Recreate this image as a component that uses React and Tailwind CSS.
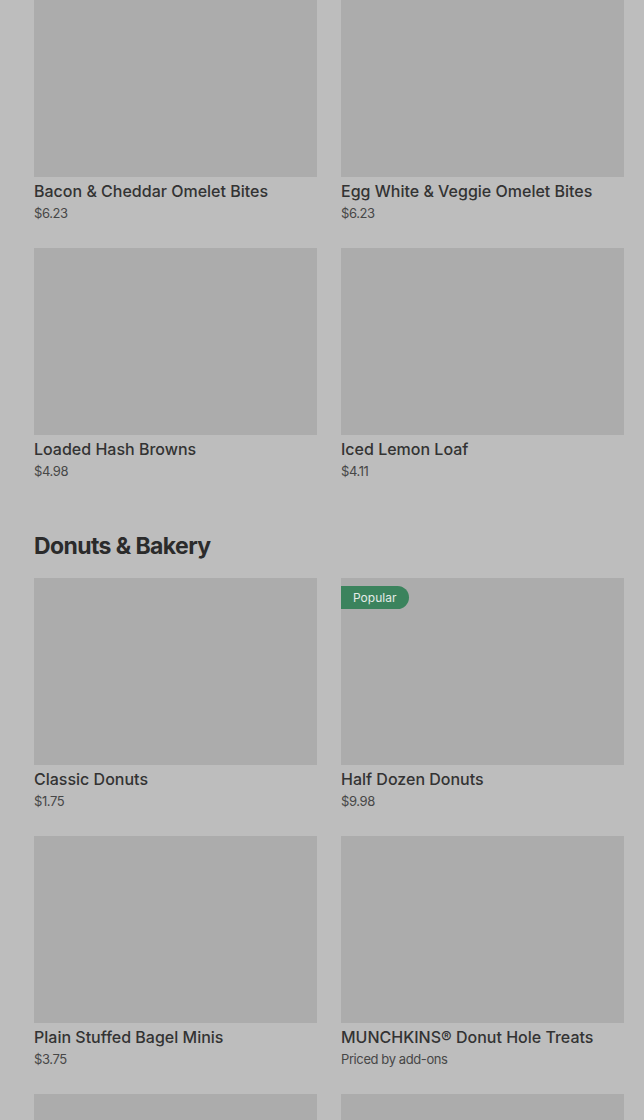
import React from 'react';

const breakfast = [
  { name: 'Bacon & Cheddar Omelet Bites', price: '$6.23' },
  { name: 'Egg White & Veggie Omelet Bites', price: '$6.23' },
  { name: 'Loaded Hash Browns', price: '$4.98' },
  { name: 'Iced Lemon Loaf', price: '$4.11' },
];

const bakery = [
  { name: 'Classic Donuts', price: '$1.75' },
  { name: 'Half Dozen Donuts', price: '$9.98', popular: true },
  { name: 'Plain Stuffed Bagel Minis', price: '$3.75' },
  { name: 'MUNCHKINS® Donut Hole Treats', price: 'Priced by add-ons' },
  { name: '', price: '' },
  { name: '', price: '' },
];

const ItemCard = ({ item }) => (
  <div className="flex flex-col">
    <div className="relative h-[187px] w-full bg-[#acacac]">
      {item.popular && (
        <span className="absolute left-0 top-[8px] flex h-[23px] items-center rounded-r-full bg-[#3b835d] pl-[12px] pr-[13px] text-[12px] text-[#e4ebe7]">
          Popular
        </span>
      )}
    </div>
    {item.name && (
      <>
        <div className="mt-[2px] text-[16px] font-medium leading-6 text-[#333333]">{item.name}</div>
        <div className="text-[13px] leading-5 tracking-[-0.4px] text-[#474747]">{item.price}</div>
      </>
    )}
  </div>
);

export default function App() {
  return (
    <div className="h-[1120px] overflow-hidden bg-[#bdbdbd] font-['Inter',sans-serif]">
      <div className="-mt-[10px] pl-[34px] pr-[20px]">
        <div className="grid grid-cols-2 gap-x-[24px] gap-y-[25px]">
          {breakfast.map((item) => (
            <ItemCard key={item.name} item={item} />
          ))}
        </div>

        <h2 className="mt-[49px] mb-[16px] text-[23px] font-bold leading-8 tracking-[-0.6px] text-[#2b2b2b]">
          Donuts &amp; Bakery
        </h2>
        <div className="grid grid-cols-2 gap-x-[24px] gap-y-[25px]">
          {bakery.map((item, i) => (
            <ItemCard key={i} item={item} />
          ))}
        </div>
      </div>
    </div>
  );
}
